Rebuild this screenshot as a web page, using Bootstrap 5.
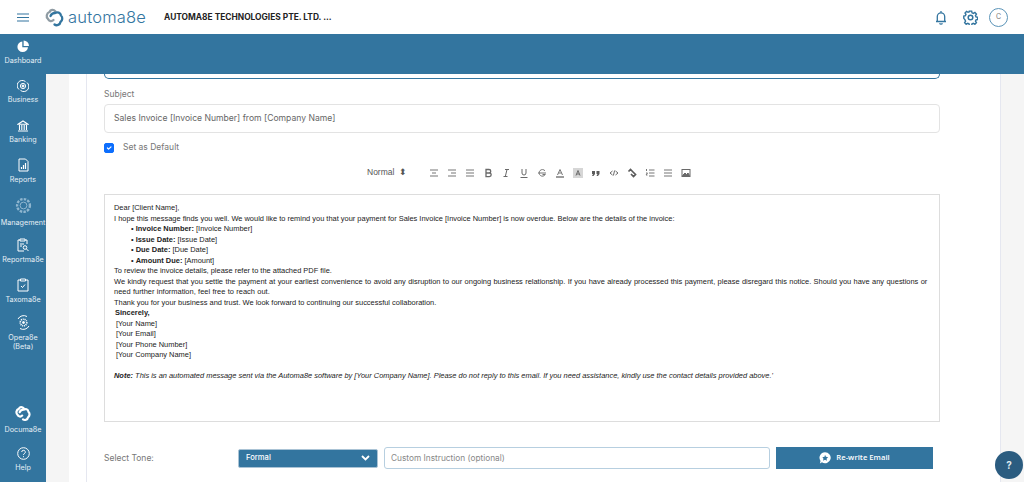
<!DOCTYPE html>
<html lang="en"><head><meta charset="utf-8"><title>Automa8e</title>
<link href="https://cdn.jsdelivr.net/npm/bootstrap@5.3.0/dist/css/bootstrap.min.css" rel="stylesheet">
<style>
html,body{height:482px;overflow:hidden}
body{font-family:Inter,"Open Sans",sans-serif;background:#f5f5f5;color:#6b6b6b}
.topbar{height:34px;background:#fff;padding-left:17px;padding-right:16px}
.brand-word{font-family:Inter,sans-serif;font-size:16.5px;font-weight:300;color:#33759f;letter-spacing:.2px;line-height:1}
.co-name{font-size:8.4px;font-weight:700;color:#222;margin-left:18px;white-space:nowrap}
.avatar-c{width:19px;height:19px;border:1px solid #5b94b8;border-radius:50%;font-size:7px;color:#777;margin-left:11px}
.bluebar{height:40px;background:#33759f;margin-left:46px}
.shell{height:448px;position:relative}
.rail{width:46px;height:448px;background:#33759f;position:absolute;left:0;top:0;color:#e6eff5}
.rail-item{position:absolute;left:0;width:46px;text-align:center;font-size:7.2px;line-height:9px}
.rail-item svg{display:block;margin:0 auto 3px}
.rail-item.wide{left:-3px;width:52px}
.main-area{margin-left:69px;margin-right:23px;background:#fff;height:408px;padding-left:17px;border-right:1px solid #e5e7f0;position:relative;overflow:hidden}
.main-inner{border-left:1px solid #e5e7f0;height:408px;padding:0 60px 0 17px}
.toedge{height:5px;border:1px solid #33759f;border-top:0;border-radius:0 0 5px 5px;width:836px;margin-bottom:10px}
.lab{font-size:8.5px;line-height:11px;color:#777;margin-bottom:4px}
.subj{width:836px;height:29px;border:1px solid #e3e3e3;border-radius:4px;font-size:8.6px;padding:0 9px;line-height:27px;color:#666}
.defrow{height:11px;margin-top:9px;font-size:8.5px;color:#777;line-height:11px}
.defrow .form-check-input{width:10px;height:10px;margin:0 9px 0 0;border-radius:2px;float:none}
.tools{height:13px;margin-top:13px;margin-left:263px;color:#555;font-family:"Liberation Sans",sans-serif;font-size:8.5px}
.tools svg{display:block;opacity:.8}
.normal-lbl{width:62px}
.tool-set{column-gap:8px}
.ed{width:836px;height:228px;border:1px solid #ddd;margin-top:15px;padding:8px 9px 0;font-family:"Liberation Sans",sans-serif;font-size:7.45px;line-height:10.5px;color:#222;overflow:hidden}
.ed .ind{padding-left:17px}
.ed .nm{padding-left:2px}
.ed .spaced-line{word-spacing:.33px}
.tonerow{margin-top:25px;height:22px}
.tone-lab{width:134px;font-size:8.5px;color:#777}
.tone-sel{width:140px;height:19px;background:#33759f;color:#fff;font-size:7.6px;border:1px solid #aac3d5;border-radius:2px;padding:0 7px;font-weight:500}
.tone-inp{width:386px;height:22px;border:1px solid #b7cfe0;border-radius:3px;margin-left:6px;font-size:8.3px;color:#888;padding:0 6px;line-height:20px}
.rewrite{width:157px;height:22px;background:#33759f;color:#fff;font-size:7.7px;font-weight:600;margin-left:6px;font-family:"Open Sans",sans-serif;column-gap:5px}
.helpfab{position:absolute;right:1px;bottom:3px;width:28px;height:28px;border-radius:50%;background:#2b5c80;color:#dfe8ef;font-weight:700;font-size:10px}
</style></head>
<body>
<nav class="topbar d-flex align-items-center">
  <svg width="12" height="9" viewBox="0 0 12 9" fill="none" stroke="#33759f" stroke-width="1.2"><path d="M0 1h12M0 4.500h12M0 8h12"/></svg>
  <svg class="ms-3" width="19" height="19" viewBox="0 0 19 19" fill="none" stroke-width="2.300" stroke-linecap="round"><path d="M10.500 3.500C8.500 1 5.500 1.500 4.500 4 1.500 5 .8 9 3 11c1 2.300 3.800 2.800 5.500 1" stroke="#8f9ba3"/><path d="M5.500 8c1-2.300 3-3 4.500-3 2.500-1.500 5.500-.5 6 2.500 2 1.800 1.500 5-.5 6.500-.5 3-4 4-6 2.500" stroke="#33759f"/></svg>
  <span class="brand-word ms-1">automa8e</span>
  <span class="co-name">AUTOMA8E TECHNOLOGIES PTE. LTD. ...</span>
  <div class="ms-auto d-flex align-items-center">
    <svg width="12" height="15" viewBox="0 0 12 15" fill="none" stroke="#33759f" stroke-width="1.3"><path d="M1 11.500h10M2.300 11.500V6.500a3.700 3.700 0 0 1 7.400 0v5M6 1v2M4.600 13.200a1.500 1.500 0 0 0 2.800 0"/></svg>
    <svg class="ms-3" width="15" height="15" viewBox="0 0 15 15" fill="none" stroke="#33759f" stroke-width="1.500"><circle cx="7.500" cy="7.500" r="2.300"/><path d="M6.300 1h2.400l.4 1.800 1.400.6 1.600-1 1.600 1.700-1 1.500.6 1.400 1.700.4v2.400l-1.700.4-.6 1.400 1 1.500-1.600 1.700-1.600-1-1.400.6-.4 1.800H6.300l-.4-1.800-1.400-.6-1.600 1-1.600-1.700 1-1.500-.6-1.400L.4 8.600V6.200l1.700-.4.6-1.400-1-1.500 1.600-1.700 1.600 1 1.400-.6z" transform="translate(.4 .2) scale(.95)"/></svg>
    <span class="avatar-c d-flex align-items-center justify-content-center">C</span>
  </div>
</nav>
<div class="shell">
  <div class="bluebar"></div>
  <aside class="rail">
    <div class="rail-item" style="top:6px"><svg width="12" height="13" viewBox="0 0 12 12" fill="#fff"><path d="M5.300 1a5.300 5.300 0 1 0 5.700 5.700H5.300z"/><path d="M6.600 0v5.400H12A5.500 5.500 0 0 0 6.600 0z"/></svg>Dashboard</div>
    <div class="rail-item" style="top:46px"><svg width="12" height="12" viewBox="0 0 12 12" fill="none" stroke="#fff"><path d="M2 9.500A5 5 0 0 1 8.500 1.600M10 2.500A5 5 0 0 1 3.500 10.400"/><circle cx="6" cy="6" r="2.600"/><circle cx="6" cy="6" r="1" fill="#fff"/></svg>Business</div>
    <div class="rail-item" style="top:86px"><svg width="12" height="12" viewBox="0 0 12 12" fill="none" stroke="#fff" stroke-width="1.100"><path d="M1 4.200 6 1l5 3.200zM2.500 5v5M4.800 5v5M7.200 5v5M9.500 5v5M1 11h10"/></svg>Banking</div>
    <div class="rail-item" style="top:124px"><svg width="11" height="14" viewBox="0 0 11 14" fill="none" stroke="#fff"><path d="M1 1h6.500L10 3.500V13H1z"/><path d="M3.500 11V9M5.500 11V7M7.500 11V5" stroke-width="1.200"/></svg>Reports</div>
    <div class="rail-item wide" style="top:162px"><svg width="19" height="19" viewBox="0 0 19 19" fill="none" stroke="#8fb6cf"><circle cx="9.500" cy="9.500" r="3.400"/><circle cx="9.500" cy="9.500" r="6.400" stroke-dasharray="2.500 1.200" stroke-width="2.400"/></svg>Management</div>
    <div class="rail-item wide" style="top:204px"><svg width="12" height="14" viewBox="0 0 12 14" fill="none" stroke="#fff"><path d="M3 2H1v11h6M8 2h2v4M3 1h5v2H3zM3 6h4M3 8h2"/><circle cx="8" cy="9.500" r="1.800"/><path d="M9.500 11l2 2"/></svg>Reportma8e</div>
    <div class="rail-item" style="top:244px"><svg width="12" height="14" viewBox="0 0 12 14" fill="none" stroke="#fff"><path d="M3.500 2H1v11h10V2H8.500M3.500 1h5v2h-5zM4 8l1.500 1.500L8 6.500"/></svg>Taxoma8e</div>
    <div class="rail-item" style="top:281px"><svg width="15" height="15" viewBox="0 0 15 15" fill="none" stroke="#fff"><path d="M2 4a6.500 6.500 0 0 1 9-2.500M13 11a6.500 6.500 0 0 1-9 2.500"/><circle cx="7.500" cy="7.500" r="3.300" stroke-dasharray="1 .8" stroke-width="1.600"/><circle cx="7.500" cy="7.500" r="1" fill="#fff"/></svg>Opera8e<br>(Beta)</div>
    <div class="rail-item" style="top:371px"><svg width="16" height="17" viewBox="0 0 19 19" fill="none" stroke="#fff" stroke-width="2.600" stroke-linecap="round"><path d="M10.500 3.500C8.500 1 5.500 1.500 4.500 4 1.500 5 .8 9 3 11c1 2.300 3.800 2.800 5.500 1"/><path d="M5.500 8c1-2.300 3-3 4.500-3 2.500-1.500 5.500-.5 6 2.500 2 1.800 1.500 5-.5 6.500-.5 3-4 4-6 2.500"/></svg>Documa8e</div>
    <div class="rail-item" style="top:413px"><svg width="13" height="13" viewBox="0 0 13 13" fill="none" stroke="#fff"><circle cx="6.500" cy="6.500" r="5.800"/><path d="M4.700 5a1.800 1.800 0 1 1 2.600 1.700c-.6.3-.8.7-.8 1.300M6.500 9.200v1"/></svg>Help</div>
  </aside>
  <main class="main-area">
    <div class="main-inner">
      <div class="toedge"></div>
      <div class="lab">Subject</div>
      <div class="subj">Sales Invoice [Invoice Number] from [Company Name]</div>
      <div class="defrow d-flex align-items-center"><input class="form-check-input" type="checkbox" checked aria-label="Set as Default"><span>Set as Default</span></div>
      <div class="tools d-flex align-items-center">
        <span class="normal-lbl">Normal &nbsp;⬍</span>
        <div class="d-flex tool-set">
          <svg width="10" height="10" viewBox="0 0 10 10" stroke="#555"><path d="M1 2h8M3 5h4M1 8h8"/></svg>
          <svg width="10" height="10" viewBox="0 0 10 10" stroke="#555"><path d="M1 2h8M4 5h5M1 8h8"/></svg>
          <svg width="10" height="10" viewBox="0 0 10 10" stroke="#555"><path d="M1 2h8M1 5h8M1 8h8"/></svg>
          <svg width="10" height="10" viewBox="0 0 10 10" fill="none" stroke="#444" stroke-width="1.300"><path d="M3 1.500h3a1.700 1.700 0 0 1 0 3.500H3zM3 5h3.400a1.800 1.800 0 0 1 0 3.600H3z"/></svg>
          <svg width="10" height="10" viewBox="0 0 10 10" fill="none" stroke="#444"><path d="M4 1.500h4M2.500 8.500h4M6 1.500 4.300 8.500"/></svg>
          <svg width="10" height="10" viewBox="0 0 10 10" fill="none" stroke="#444"><path d="M3 1v4a2 2 0 0 0 4 0V1M1.500 9.500h7"/></svg>
          <svg width="10" height="10" viewBox="0 0 10 10" fill="none" stroke="#555"><path d="M8 2.800A3.300 3.300 0 1 0 8.300 6.500H5.500M1 5h8"/></svg>
          <svg width="10" height="10" viewBox="0 0 10 10" fill="none" stroke="#555"><path d="M2.500 7 5 1.500 7.500 7M3.500 5h3"/><path d="M1 9h8" stroke="#333" stroke-width="1.200"/></svg>
          <svg width="10" height="10" viewBox="0 0 10 10"><rect width="10" height="10" fill="#ccc"/><path d="M3 7.500 5 2.500l2 5M3.800 6h2.400" fill="none" stroke="#444"/></svg>
          <svg width="10" height="10" viewBox="0 0 10 10" fill="#333"><path d="M1 3h3v3l-1.500 2H1l1-2H1zM5.500 3h3v3L7 8H5.500l1-2h-1z"/></svg>
          <svg width="10" height="10" viewBox="0 0 10 10" fill="none" stroke="#444"><path d="M3.500 3 1 5l2.500 2M6.500 3 9 5 6.500 7M5.600 2.500 4.400 7.500"/></svg>
          <svg width="10" height="10" viewBox="0 0 10 10" fill="none" stroke="#333" stroke-width="1.700"><path d="M1.500 3.500 3.500 1.500 6 4M4 6l2.500 2.500 2-2L6 4"/></svg>
          <svg width="10" height="10" viewBox="0 0 10 10" fill="none" stroke="#555"><path d="M4 2h5.500M4 5h5.500M4 8h5.500M1.500 1v2M1 5h1.500L1 7h1.500"/></svg>
          <svg width="10" height="10" viewBox="0 0 10 10" fill="none" stroke="#555"><path d="M1 2h8M1 5h8M1 8h8"/></svg>
          <svg width="10" height="10" viewBox="0 0 10 10" fill="none" stroke="#444"><rect x="1" y="1.500" width="8" height="7"/><path d="M1.500 7.500 4 5l1.500 1.500L7 5l1.500 2.500z" fill="#444"/></svg>
        </div>
      </div>
      <div class="ed">
        <div>Dear [Client Name],</div>
        <div>I hope this message finds you well. We would like to remind you that your payment for Sales Invoice [Invoice Number] is now overdue. Below are the details of the invoice:</div>
        <div class="ind">• <b>Invoice Number:</b> [Invoice Number]</div>
        <div class="ind">• <b>Issue Date:</b> [Issue Date]</div>
        <div class="ind">• <b>Due Date:</b> [Due Date]</div>
        <div class="ind">• <b>Amount Due:</b> [Amount]</div>
        <div>To review the invoice details, please refer to the attached PDF file.</div>
        <div class="spaced-line">We kindly request that you settle the payment at your earliest convenience to avoid any disruption to our ongoing business relationship. If you have already processed this payment, please disregard this notice. Should you have any questions or need further information, feel free to reach out.</div>
        <div>Thank you for your business and trust. We look forward to continuing our successful collaboration.</div>
        <div class="nm" style="padding-left:1px"><b>Sincerely,</b></div>
        <div class="nm">[Your Name]</div>
        <div class="nm">[Your Email]</div>
        <div class="nm">[Your Phone Number]</div>
        <div class="nm">[Your Company Name]</div>
        <div>&nbsp;</div>
        <div><b><i>Note:</i></b> <i>This is an automated message sent via the Automa8e software by [Your Company Name]. Please do not reply to this email. If you need assistance, kindly use the contact details provided above.'</i></div>
      </div>
      <div class="tonerow d-flex align-items-center">
        <span class="tone-lab">Select Tone:</span>
        <div class="tone-sel d-flex align-items-center justify-content-between"><span>Formal</span><svg width="9" height="6" viewBox="0 0 9 6" fill="none" stroke="#fff" stroke-width="1.800"><path d="M1 1l3.500 3.500L8 1"/></svg></div>
        <div class="tone-inp">Custom Instruction (optional)</div>
        <div class="rewrite d-flex align-items-center justify-content-center"><svg width="12" height="12" viewBox="0 0 11 11"><path d="M5.500.3a5.200 5 0 1 1-2.800 9.200L.8 10.500l.6-2.300A5 5 0 0 1 5.500.3z" fill="#fff"/><path d="M5.500 2.500l.9 1.900 2 .3-1.500 1.400.4 2-1.800-1-1.800 1 .4-2L3.100 4.700l2-.3z" fill="#33759f"/></svg><span>Re-write Email</span></div>
      </div>
    </div>
  </main>
  <div class="helpfab d-flex align-items-center justify-content-center">?</div>
</div>
</body></html>
